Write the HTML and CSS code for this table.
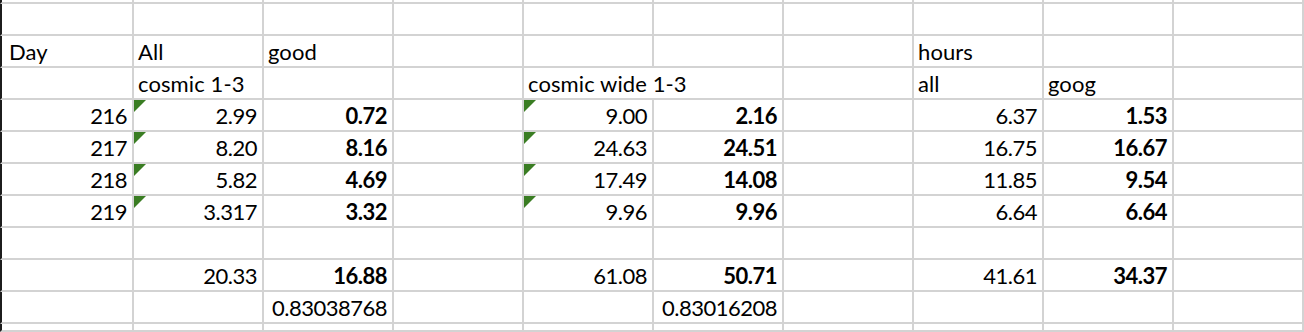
FILE: index.html
```html
<!DOCTYPE html>
<html>
<head>
<meta charset="utf-8">
<link rel="stylesheet" href="styles.css">
</head>
<body>
<div class="sheet">
  <!-- row 0 (partial) -->
  <div class="c first stub"></div><div class="c stub"></div><div class="c stub"></div><div class="c stub"></div><div class="c stub"></div><div class="c stub"></div><div class="c stub"></div><div class="c stub"></div><div class="c stub"></div><div class="c stub"></div>
  <!-- row 1 -->
  <div class="c first"></div><div class="c"></div><div class="c"></div><div class="c"></div><div class="c"></div><div class="c"></div><div class="c"></div><div class="c"></div><div class="c"></div><div class="c"></div>
  <!-- row 2 -->
  <div class="c first t">Day</div><div class="c t">All</div><div class="c t">good</div><div class="c"></div><div class="c"></div><div class="c"></div><div class="c"></div><div class="c t">hours</div><div class="c"></div><div class="c"></div>
  <!-- row 3 -->
  <div class="c first"></div><div class="c t">cosmic 1-3</div><div class="c"></div><div class="c"></div><div class="c t span2">cosmic wide 1-3</div><div class="c"></div><div class="c t">all</div><div class="c t">goog</div><div class="c"></div>
  <!-- row 4 -->
  <div class="c first n">216</div><div class="c n flag">2.99</div><div class="c n b">0.72</div><div class="c"></div><div class="c n flag">9.00</div><div class="c n b">2.16</div><div class="c"></div><div class="c n">6.37</div><div class="c n b">1.53</div><div class="c"></div>
  <!-- row 5 -->
  <div class="c first n">217</div><div class="c n flag">8.20</div><div class="c n b">8.16</div><div class="c"></div><div class="c n flag">24.63</div><div class="c n b">24.51</div><div class="c"></div><div class="c n">16.75</div><div class="c n b">16.67</div><div class="c"></div>
  <!-- row 6 -->
  <div class="c first n">218</div><div class="c n flag">5.82</div><div class="c n b">4.69</div><div class="c"></div><div class="c n flag">17.49</div><div class="c n b">14.08</div><div class="c"></div><div class="c n">11.85</div><div class="c n b">9.54</div><div class="c"></div>
  <!-- row 7 -->
  <div class="c first n">219</div><div class="c n flag">3.317</div><div class="c n b">3.32</div><div class="c"></div><div class="c n flag">9.96</div><div class="c n b">9.96</div><div class="c"></div><div class="c n">6.64</div><div class="c n b">6.64</div><div class="c"></div>
  <!-- row 8 -->
  <div class="c first"></div><div class="c"></div><div class="c"></div><div class="c"></div><div class="c"></div><div class="c"></div><div class="c"></div><div class="c"></div><div class="c"></div><div class="c"></div>
  <!-- row 9 -->
  <div class="c first"></div><div class="c n">20.33</div><div class="c n b">16.88</div><div class="c"></div><div class="c n">61.08</div><div class="c n b">50.71</div><div class="c"></div><div class="c n">41.61</div><div class="c n b">34.37</div><div class="c"></div>
  <!-- row 10 -->
  <div class="c first"></div><div class="c"></div><div class="c n">0.83038768</div><div class="c"></div><div class="c"></div><div class="c n">0.83016208</div><div class="c"></div><div class="c"></div><div class="c"></div><div class="c"></div>
  <!-- row 11 (partial) -->
  <div class="c first"></div><div class="c"></div><div class="c"></div><div class="c"></div><div class="c"></div><div class="c"></div><div class="c"></div><div class="c"></div><div class="c"></div><div class="c"></div>
</div>
</body>
</html>
```

FILE: styles.css
```css
html, body {
  margin: 0;
  padding: 0;
  background: #ffffff;
}

body {
  width: 1304px;
  height: 332px;
  overflow: hidden;
}

.sheet {
  display: grid;
  grid-template-columns: 134px repeat(9, 130px);
  grid-template-rows: 4px repeat(10, 32px) 8px;
  font-family: "Lato", "Noto Sans", sans-serif;
  font-size: 22px;
  color: #000000;
}

.c {
  box-sizing: border-box;
  position: relative;
  border-right: 2px solid #d3d3d3;
  border-bottom: 2px solid #d3d3d3;
  display: flex;
  align-items: flex-end;
  line-height: 22px;
  padding: 0 5px 3px 4px;
  white-space: nowrap;
  overflow: visible;
}

.c.first {
  border-left: 2px solid #1c1c1c;
  padding-left: 7px;
}

.c.stub {
  padding: 0;
}

.t {
  justify-content: flex-start;
  letter-spacing: 0.1px;
}

.n {
  justify-content: flex-end;
  letter-spacing: -0.5px;
}

.b {
  font-weight: 700;
}

.span2 {
  grid-column: span 2;
}

.flag::before {
  content: "";
  position: absolute;
  left: 0;
  top: 0;
  width: 0;
  height: 0;
  border-top: 12px solid #3a7d23;
  border-right: 12px solid transparent;
}
```
